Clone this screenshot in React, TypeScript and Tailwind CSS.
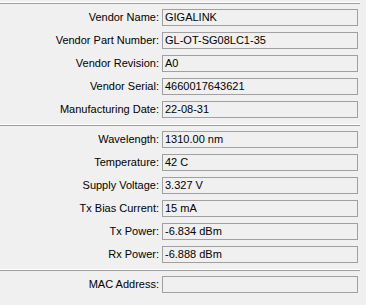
import React from 'react'

interface Field {
    label: string
    value: string
}

const vendorFields: Field[] = [
    { label: 'Vendor Name:', value: 'GIGALINK' },
    { label: 'Vendor Part Number:', value: 'GL-OT-SG08LC1-35' },
    { label: 'Vendor Revision:', value: 'A0' },
    { label: 'Vendor Serial:', value: '4660017643621' },
    { label: 'Manufacturing Date:', value: '22-08-31' },
]

const statusFields: Field[] = [
    { label: 'Wavelength:', value: '1310.00 nm' },
    { label: 'Temperature:', value: '42 C' },
    { label: 'Supply Voltage:', value: '3.327 V' },
    { label: 'Tx Bias Current:', value: '15 mA' },
    { label: 'Tx Power:', value: '-6.834 dBm' },
    { label: 'Rx Power:', value: '-6.888 dBm' },
]

function Separator() {
    return (
        <div className="w-[360px] flex flex-col">
            <div className="h-px bg-white" />
            <div className="h-px bg-[#a0a0a0]" />
        </div>
    )
}

function Row({ label, value }: Field) {
    return (
        <div className="flex items-center h-[17px]">
            <div className="w-[159px] text-right leading-none">{label}</div>
            <div className="ml-[3px] w-[196px] h-[17px] border border-[#a0a0a0] bg-[#f0f0f0] flex items-center pl-[2px] leading-none">
                {value}
            </div>
        </div>
    )
}

export default function App() {
    return (
        <div
            className="w-[366px] h-[305px] bg-[#f0f0f0] pt-[2px] text-[11px] text-black overflow-hidden"
            style={{ fontFamily: '"Liberation Sans", Arial, sans-serif' }}
        >
            <Separator />
            <div className="flex flex-col gap-[6px] mt-[5px]">
                {vendorFields.map((f) => (
                    <Row key={f.label} {...f} />
                ))}
            </div>
            <div className="mt-[6px]">
                <Separator />
            </div>
            <div className="flex flex-col gap-[6px] mt-[5px]">
                {statusFields.map((f) => (
                    <Row key={f.label} {...f} />
                ))}
            </div>
            <div className="mt-[6px]">
                <Separator />
            </div>
            <div className="flex flex-col mt-[5px]">
                <Row label="MAC Address:" value="" />
            </div>
        </div>
    )
}
